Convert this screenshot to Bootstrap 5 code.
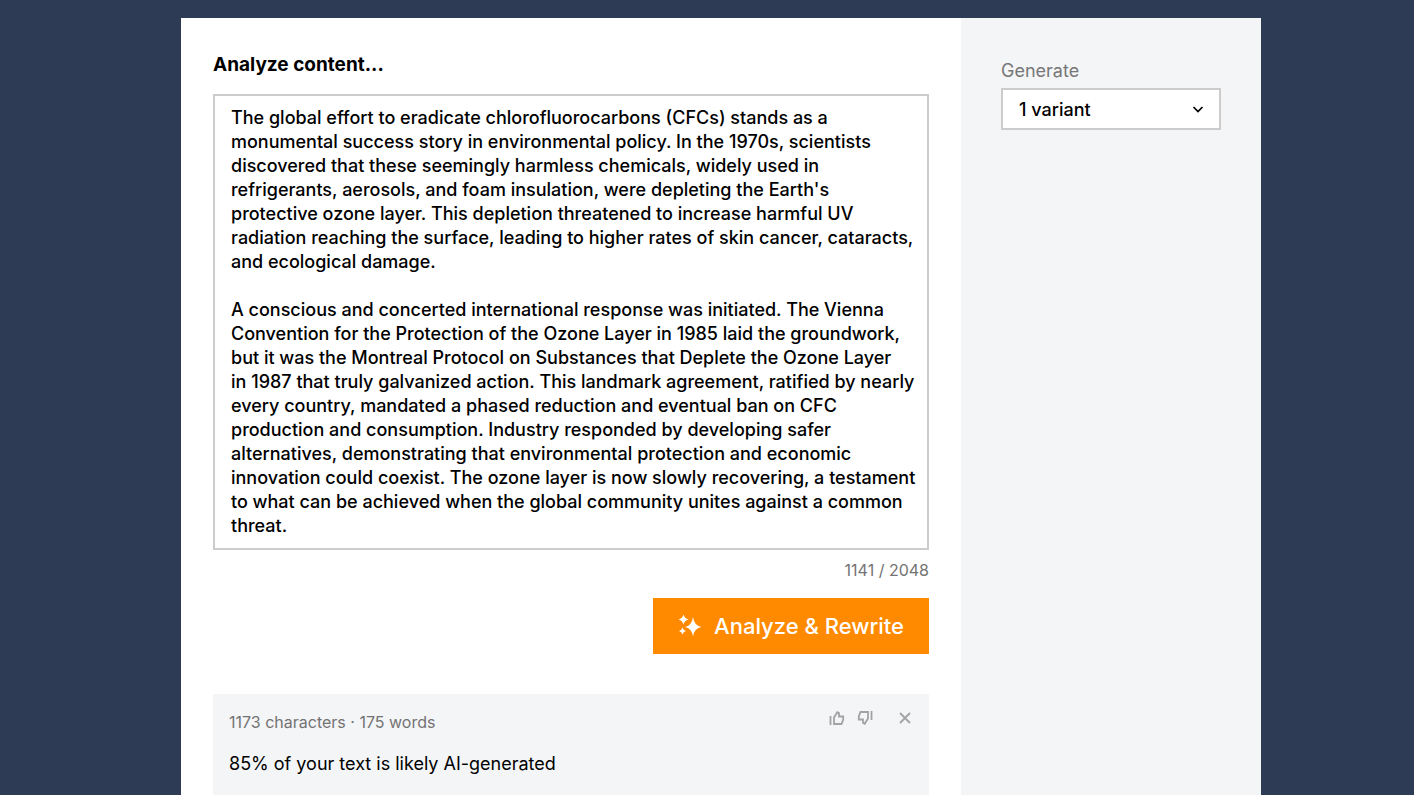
<!DOCTYPE html>
<html lang="en">
<head>
<meta charset="utf-8">
<meta name="viewport" content="width=device-width, initial-scale=1">
<title>Analyze &amp; Rewrite</title>
<link href="https://cdn.jsdelivr.net/npm/bootstrap@5.3.0/dist/css/bootstrap.min.css" rel="stylesheet">
<style>
  body { background: #2e3b55; color: #000; font-family: Inter, sans-serif; overflow-x: hidden; }
  .page-wrap { padding: 18px 0 0 28px; }
  .panel { max-width: 1080px; min-height: calc(100vh - 18px); }
  .editor { padding: 32px 32px 0; }
  .options { flex: 0 0 300px; padding: 40px; background: #f3f5f7; }
  .display-type { font-family: Inter, sans-serif; font-weight: 500; }
  .title-text { font-size: 19px; line-height: 30px; font-weight: 700; margin-bottom: 14px; }
  .field { border: 2px solid #ccc; color: #000; font-size: 18px; line-height: 24px; }
  .field:focus { border-color: #ff8a00; box-shadow: none; color: #000; }
  .text-field { padding: 10px 4px 10px 16px; resize: none; overflow: hidden; }
  .choice-field {
    height: 42px; padding: 8px 40px 6px 16px; background-position: right 13px center; background-size: 16px;
    background-image: url("data:image/svg+xml,%3Csvg xmlns='http://www.w3.org/2000/svg' viewBox='0 0 16 16'%3E%3Cpath d='M3.5 6l4.5 4.5L12.5 6' fill='none' stroke='%23000' stroke-width='1.7'/%3E%3C/svg%3E");
  }
  .choice-label { font-size: 18px; line-height: 26px; font-weight: 400; color: #777; margin-bottom: 4px; }
  .muted-text { font-size: 16px; line-height: 24px; color: #737373; }
  .action-btn { height: 56px; padding: 0 25px; background: #ff8a00; font-size: 22px; gap: 12px; }
  .action-btn.btn:hover, .action-btn.btn:active { background: #eb7f00; color: #fff; }
  .result { margin-top: 40px; padding: 16px; background: #f3f5f7; }
  .result-text { font-size: 18px; line-height: 28px; margin-top: 16px; }
  .tool-btn { color: #a3a3a3; line-height: 1; }
</style>
<script src="https://cdn.jsdelivr.net/npm/bootstrap@5.3.0/dist/js/bootstrap.bundle.min.js" defer></script>
</head>
<body>
<div class="page-wrap">
  <div class="panel d-flex bg-white mx-auto">
    <main class="editor flex-fill d-flex flex-column">
      <label for="content" class="title-text display-type">Analyze content...</label>
      <textarea id="content" class="form-control field text-field display-type rounded-0" rows="18" maxlength="2048" spellcheck="false">The global effort to eradicate chlorofluorocarbons (CFCs) stands as a
monumental success story in environmental policy. In the 1970s, scientists
discovered that these seemingly harmless chemicals, widely used in
refrigerants, aerosols, and foam insulation, were depleting the Earth's
protective ozone layer. This depletion threatened to increase harmful UV
radiation reaching the surface, leading to higher rates of skin cancer, cataracts,
and ecological damage.

A conscious and concerted international response was initiated. The Vienna
Convention for the Protection of the Ozone Layer in 1985 laid the groundwork,
but it was the Montreal Protocol on Substances that Deplete the Ozone Layer
in 1987 that truly galvanized action. This landmark agreement, ratified by nearly
every country, mandated a phased reduction and eventual ban on CFC
production and consumption. Industry responded by developing safer
alternatives, demonstrating that environmental protection and economic
innovation could coexist. The ozone layer is now slowly recovering, a testament
to what can be achieved when the global community unites against a common
threat.</textarea>
      <div class="muted-text text-end mt-2">1141 / 2048</div>
      <div class="d-flex justify-content-end mt-3">
        <button type="button" class="btn action-btn display-type text-white rounded-0 border-0 d-flex align-items-center">
          <svg width="24" height="24" viewBox="0 0 24 24" fill="currentColor" aria-hidden="true">
            <path d="M15 3Q16.200 11.800 23.500 13Q16.200 14.200 15 22.500Q13.800 14.200 7 13Q13.800 11.800 15 3Z"/>
            <path d="M5.500 .5Q6.500 4.500 10.500 5.500Q6.500 6.500 5.500 10.500Q4.500 6.500 .5 5.500Q4.500 4.500 5.500 .5Z"/>
            <path d="M4.500 13.500Q5.200 16.300 8 17Q5.200 17.700 4.500 20.500Q3.800 17.700 1 17Q3.800 16.300 4.500 13.500Z"/>
          </svg>
          <span>Analyze &amp; Rewrite</span>
        </button>
      </div>
      <section class="result flex-grow-1">
        <div class="d-flex justify-content-between align-items-start">
          <div class="muted-text">1173 characters · 175 words</div>
          <div class="d-flex align-items-start">
            <button type="button" class="btn tool-btn d-flex p-0 border-0 me-2" aria-label="Helpful">
              <svg width="16" height="16" viewBox="0 0 16 16" fill="none" stroke="currentColor" stroke-width="1.800" aria-hidden="true"><path d="M1.500 6V15M5 14V7.500L8.300 2.200L10 3V6.500H14.200V9.500L12.500 14Z"/></svg>
            </button>
            <button type="button" class="btn tool-btn d-flex p-0 border-0 ms-1" aria-label="Not helpful">
              <svg width="16" height="16" viewBox="0 0 16 16" fill="none" stroke="currentColor" stroke-width="1.800" aria-hidden="true"><path d="M14.500 10V1M11 2V8.500L7.700 13.800L6 13V9.500H1.800V6.500L3.500 2Z"/></svg>
            </button>
            <button type="button" class="btn tool-btn d-flex p-0 border-0 ms-4" aria-label="Close">
              <svg width="16" height="16" viewBox="0 0 16 16" fill="none" stroke="currentColor" stroke-width="1.800" aria-hidden="true"><path d="M3 3L13 13M13 3L3 13"/></svg>
            </button>
          </div>
        </div>
        <div class="result-text">85% of your text is likely AI-generated</div>
      </section>
    </main>
    <aside class="options">
      <label for="variants" class="choice-label display-type d-block">Generate</label>
      <select id="variants" class="form-select field choice-field display-type rounded-0">
        <option>1 variant</option>
        <option>2 variants</option>
        <option>3 variants</option>
      </select>
    </aside>
  </div>
</div>
</body>
</html>
